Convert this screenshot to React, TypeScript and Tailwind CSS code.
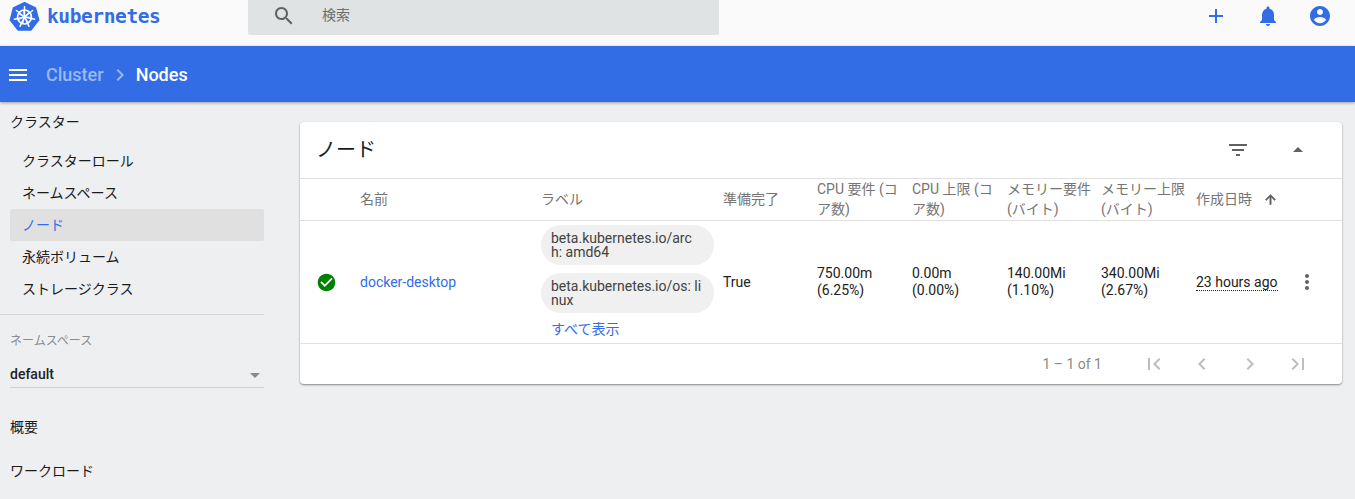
const FONT = "font-['Roboto','Noto_Sans_CJK_JP',sans-serif]";

function Icon({ d, className }: { d: string; className: string }) {
  return (
    <svg viewBox="0 0 24 24" fill="currentColor" className={className}>
      <path d={d} />
    </svg>
  );
}

const paths = {
  menu: "M3 18h18v-2H3v2zm0-5h18v-2H3v2zm0-7v2h18V6H3z",
  search:
    "M15.5 14h-.79l-.28-.27C15.41 12.59 16 11.11 16 9.5 16 5.91 13.09 3 9.5 3S3 5.91 3 9.5 5.91 16 9.5 16c1.61 0 3.09-.59 4.23-1.57l.27.28v.79l5 4.99L20.49 19l-4.99-5zm-6 0C7.01 14 5 11.99 5 9.5S7.01 5 9.5 5 14 7.01 14 9.5 11.99 14 9.5 14z",
  add: "M19 13h-6v6h-2v-6H5v-2h6V5h2v6h6v2z",
  bell: "M12 22c1.1 0 2-.9 2-2h-4c0 1.1.89 2 2 2zm6-6v-5c0-3.07-1.64-5.64-4.5-6.32V4c0-.83-.67-1.5-1.5-1.5s-1.5.67-1.5 1.5v.68C7.63 5.36 6 7.92 6 11v5l-2 2v1h16v-1l-2-2z",
  account:
    "M12 2C6.48 2 2 6.48 2 12s4.48 10 10 10 10-4.48 10-10S17.52 2 12 2zm0 3c1.66 0 3 1.34 3 3s-1.34 3-3 3-3-1.34-3-3 1.34-3 3-3zm0 14.2c-2.5 0-4.71-1.28-6-3.22.03-1.99 4-3.08 6-3.08 1.99 0 5.97 1.09 6 3.08-1.29 1.94-3.5 3.22-6 3.22z",
  filter: "M10 18h4v-2h-4v2zM3 6v2h18V6H3zm3 7h12v-2H6v2z",
  dropUp: "M7 14l5-5 5 5z",
  dropDown: "M7 10l5 5 5-5z",
  arrowUp: "M4 12l1.41 1.41L11 7.83V20h2V7.83l5.58 5.59L20 12l-8-8-8 8z",
  check:
    "M12 2C6.48 2 2 6.48 2 12s4.48 10 10 10 10-4.48 10-10S17.52 2 12 2zm-2 15l-5-5 1.41-1.41L10 14.17l7.59-7.59L19 8l-9 9z",
  more: "M12 8c1.1 0 2-.9 2-2s-.9-2-2-2-2 .9-2 2 .9 2 2 2zm0 2c-1.1 0-2 .9-2 2s.9 2 2 2 2-.9 2-2-.9-2-2-2zm0 6c-1.1 0-2 .9-2 2s.9 2 2 2 2-.9 2-2-.9-2-2-2z",
  first: "M18.41 16.59L13.82 12l4.59-4.59L17 6l-6 6 6 6zM6 6h2v12H6z",
  prev: "M15.41 7.41L14 6l-6 6 6 6 1.41-1.41L10.83 12z",
  next: "M10 6L8.59 7.41 13.17 12l-4.58 4.59L10 18l6-6z",
  last: "M5.59 7.41L10.18 12l-4.59 4.59L7 18l6-6-6-6zM16 6h2v12h-2z",
  chevron: "M10 6L8.59 7.41 13.17 12l-4.58 4.59L10 18l6-6z",
};

function KubeLogo() {
  const spokes = [0, 51.4, 102.9, 154.3, 205.7, 257.1, 308.6];
  return (
    <svg viewBox="0 0 32 32" className="h-[31px] w-[31px]">
      <path
        d="M16 1 L27.2 6.4 L30.4 18.6 L22.6 28.6 L9.4 28.6 L1.6 18.6 L4.8 6.4 Z"
        fill="#326de6"
        stroke="#326de6"
        strokeWidth="2"
        strokeLinejoin="round"
      />
      <circle cx="16" cy="15.5" r="7.2" fill="none" stroke="#fff" strokeWidth="1.7" />
      <circle cx="16" cy="15.5" r="1.8" fill="#fff" />
      {spokes.map((a) => (
        <g key={a} transform={`rotate(${a} 16 15.5)`}>
          <line x1="16" y1="15.5" x2="16" y2="4.8" stroke="#fff" strokeWidth="1.5" strokeLinecap="round" />
          <line x1="16" y1="15.5" x2="20.8" y2="9.8" stroke="#fff" strokeWidth="0.8" />
        </g>
      ))}
    </svg>
  );
}

function TopBar() {
  return (
    <div className="flex h-[46px] items-start bg-[#fafafa]">
      <div className="flex h-[34px] w-[248px] items-center pl-[9px]">
        <KubeLogo />
        <span className="ml-[7px] font-['DejaVu_Sans_Mono',monospace] text-[19.5px] font-bold leading-none tracking-[-0.4px] text-[#326de6]">
          kubernetes
        </span>
      </div>
      <div className="flex h-[35px] w-[471px] items-center rounded-b-[2px] bg-[#dfe3e3] pb-[4px] pl-[24px]">
        <Icon d={paths.search} className="h-6 w-6 text-[#616161]" />
        <span className="ml-[26px] text-[14px] text-[#6b6f6f]">検索</span>
      </div>
      <div className="ml-auto flex h-[32px] items-center gap-[12px] pr-[15px] text-[#326de6]">
        <div className="flex w-[40px] justify-center">
          <Icon d={paths.add} className="h-6 w-6" />
        </div>
        <div className="flex w-[40px] justify-center">
          <Icon d={paths.bell} className="h-6 w-6" />
        </div>
        <div className="flex w-[40px] justify-center">
          <Icon d={paths.account} className="h-6 w-6" />
        </div>
      </div>
    </div>
  );
}

function BlueBar() {
  return (
    <div className="relative z-10 flex h-[56px] items-center bg-[#326de6] pl-[6px] pt-[1px] text-[18px] font-medium text-white shadow-[0_1px_3px_rgba(0,0,0,0.35)]">
      <Icon d={paths.menu} className="h-6 w-6" />
      <span className="ml-[16px] text-[#9ab8f3]">Cluster</span>
      <Icon d={paths.chevron} className="mx-[4px] h-6 w-6 text-[#9ab8f3]" />
      <span>Nodes</span>
    </div>
  );
}

function Sidebar() {
  const items = ["クラスターロール", "ネームスペース", "ノード", "永続ボリューム", "ストレージクラス"];
  return (
    <aside className="w-[264px] shrink-0 text-[14px] text-[#1b1b1b]">
      <div className="flex h-[40px] items-center pl-[10px]">クラスター</div>
      <div className="mt-[3px] ml-[10px]">
        {items.map((item) => (
          <div
            key={item}
            className={
              item === "ノード"
                ? "flex h-[32px] items-center rounded-[2px] bg-[#e0e0e0] pl-[12px] text-[#326de6]"
                : "flex h-[32px] items-center pl-[12px]"
            }
          >
            {item}
          </div>
        ))}
      </div>
      <div className="mt-[9px] border-t border-[#d6d6d6] pl-[10px]">
        <div className="pt-[16px] text-[12px] leading-[20px] text-[#8a8d8f]">ネームスペース</div>
        <div className="mt-[9px] flex h-[28px] items-center justify-between border-b border-[#cfcfcf] pt-[2px] font-medium text-[#212121]">
          <span className="text-[14px]">default</span>
          <Icon d={paths.dropDown} className="-mr-[3px] h-6 w-6 text-[#8a8a8a]" />
        </div>
      </div>
      <div className="mt-[29px] pl-[10px] leading-[20px]">概要</div>
      <div className="mt-[24px] pl-[10px] leading-[20px]">ワークロード</div>
    </aside>
  );
}

const GRID = "grid grid-cols-[60px_181px_182px_94px_95px_95px_94px_95px_1fr] items-center";

function NodeCard() {
  const headers = ["CPU 要件 (コア数)", "CPU 上限 (コア数)", "メモリー要件 (バイト)", "メモリー上限 (バイト)"];
  const values = [
    ["750.00m", "(6.25%)"],
    ["0.00m", "(0.00%)"],
    ["140.00Mi", "(1.10%)"],
    ["340.00Mi", "(2.67%)"],
  ];
  return (
    <section className="h-[262px] w-[1042px] overflow-hidden rounded-[4px] bg-white shadow-[0_1px_2px_rgba(0,0,0,0.45)]">
      <div className="flex h-[57px] items-center border-b border-[#e0e0e0] pl-[16px]">
        <h2 className="text-[20px] leading-none text-[#1b1b1b]">ノード</h2>
        <Icon d={paths.filter} className="ml-auto h-6 w-6 text-[#616161]" />
        <Icon d={paths.dropUp} className="mr-[32px] ml-[36px] h-6 w-6 text-[#616161]" />
      </div>

      <div className={`${GRID} h-[42px] border-b border-[#e0e0e0] pb-[1px] text-[14px] leading-[20px] text-[#757575]`}>
        <div />
        <div>名前</div>
        <div>ラベル</div>
        <div>準備完了</div>
        {headers.map((h) => (
          <div key={h} className="pr-[6px]">
            {h}
          </div>
        ))}
        <div className="flex items-center">
          <span>作成日時</span>
          <Icon d={paths.arrowUp} className="ml-[11px] h-[15px] w-[15px] stroke-current stroke-1 text-[#616161]" />
        </div>
      </div>

      <div className={`${GRID} h-[123px] border-b border-[#e0e0e0] text-[14px] leading-[17px] text-[#212121]`}>
        <Icon d={paths.check} className="mt-[1px] ml-[16px] h-[21px] w-[21px] text-[#008000]" />
        <div className="text-[#326de6]">docker-desktop</div>
        <div className="mb-[3px] flex flex-col gap-[8px] pr-[9px]">
          <div className="rounded-[20px] bg-[#f0f0f0] px-[10px] py-[6px] leading-[14px] text-[#424242]">
            beta.kubernetes.io/arc
            <br />
            h: amd64
          </div>
          <div className="rounded-[20px] bg-[#f0f0f0] px-[10px] py-[6px] leading-[14px] text-[#424242]">
            beta.kubernetes.io/os: li
            <br />
            nux
          </div>
          <div className="pl-[10px] leading-[16px] text-[#326de6]">すべて表示</div>
        </div>
        <div>True</div>
        {values.map(([v, p]) => (
          <div key={v}>
            {v}
            <br />
            {p}
          </div>
        ))}
        <div className="mt-[1px] flex items-center">
          <span className="border-b border-dotted border-[#212121] leading-[15px]">23 hours ago</span>
          <Icon d={paths.more} className="-mt-[1px] ml-[17px] h-6 w-6 text-[#616161]" />
        </div>
      </div>

      <div className="flex h-[40px] items-center pr-[32px] text-[#bdbdbd]">
        <span className="ml-auto mr-[40px] text-[14px] text-[#8a8a8a]">1 – 1 of 1</span>
        <div className="flex gap-[24px]">
          <Icon d={paths.first} className="h-6 w-6" />
          <Icon d={paths.prev} className="h-6 w-6" />
          <Icon d={paths.next} className="h-6 w-6" />
          <Icon d={paths.last} className="h-6 w-6" />
        </div>
      </div>
    </section>
  );
}

export default function App() {
  return (
    <div className={`${FONT} h-[499px] w-[1355px] overflow-hidden bg-[#eeeff1]`}>
      <TopBar />
      <BlueBar />
      <div className="flex">
        <Sidebar />
        <main className="pl-[36px] pt-[20px]">
          <NodeCard />
        </main>
      </div>
    </div>
  );
}
